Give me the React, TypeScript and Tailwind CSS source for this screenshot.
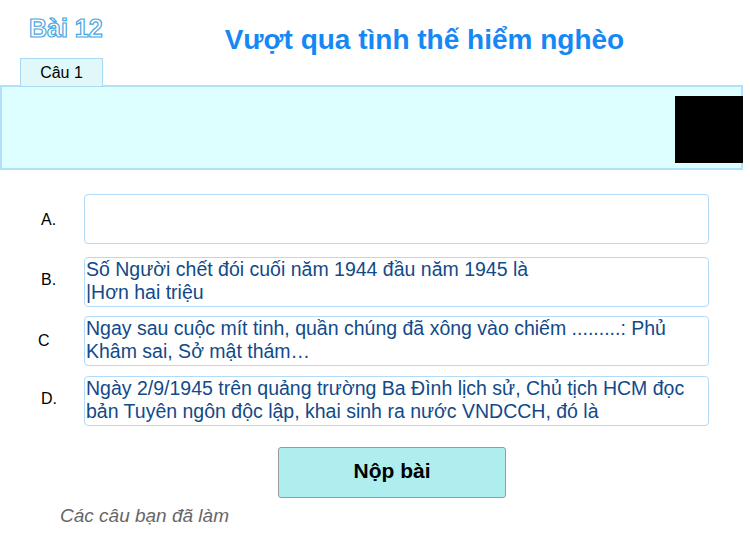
import React from "react";

const Opt = ({ label, text, mt, lx }: { label: string; text: string; mt: string; lx: string }) => (
  <div className={`flex items-center ${mt}`}>
    <div className={`w-[84px] ${lx} text-[16px] text-black`}>{label}</div>
    <div className="w-[625px] h-[50px] rounded-[4px] border-[1.5px] border-[#b3dbf8] bg-white px-[1px] text-[19.5px] leading-[23px] text-[#124a89] overflow-hidden whitespace-pre-line">
      {text}
    </div>
  </div>
);

export default function App() {
  return (
    <div className="w-[750px] h-[540px] bg-white overflow-hidden" style={{ fontFamily: '"Liberation Sans", Arial, sans-serif' }}>
      <div className="h-[58px] flex items-start">
        <div className="ml-[29px] mt-[13px] text-[25px] leading-[30px] font-bold text-white [-webkit-text-stroke:1.2px_#4aa6e2]">Bài 12</div>
        <div className="ml-[122px] mt-[24px] text-[28px] leading-[32px] font-bold text-[#1588f5]">Vượt qua tình thế hiểm nghèo</div>
      </div>
      <div className="relative z-10 ml-[20px] w-[83px] h-[29px] border border-[#a9d9f4] bg-[#e0f8f8] flex items-center justify-center text-[16px] text-black">Câu 1</div>
      <div className="-mt-[2px] w-[743px] h-[85px] border-2 border-[#b2e0fb] bg-[#ddffff] flex items-center justify-end">
        <div className="w-[68px] h-[67px] bg-black -mr-[2px] mt-[4px]"></div>
      </div>
      <Opt label="A." text="" mt="mt-[24px]" lx="pl-[41px] pt-[2px]" />
      <Opt label="B." text={"Số Người chết đói cuối năm 1944 đầu năm 1945 là\n|Hơn hai triệu"} mt="mt-[13px]" lx="pl-[41px] pb-[4px]" />
      <Opt label="C" text="Ngay sau cuộc mít tinh, quần chúng đã xông vào chiếm .........: Phủ Khâm sai, Sở mật thám…" mt="mt-[9px]" lx="pl-[38px]" />
      <Opt label="D." text="Ngày 2/9/1945 trên quảng trường Ba Đình lịch sử, Chủ tịch HCM đọc bản Tuyên ngôn độc lập, khai sinh ra nước VNDCCH, đó là" mt="mt-[10px]" lx="pl-[41px] pb-[5px]" />
      <div className="mt-[21px] ml-[278px] w-[228px] h-[51px] rounded-[3px] border border-[#9a9a9a] bg-[#afeeee] flex items-center justify-center pb-[4px] text-[21px] font-bold text-black">Nộp bài</div>
      <div className="mt-[4px] ml-[60px] text-[19px] italic text-[#666666]">Các câu bạn đã làm</div>
    </div>
  );
}
